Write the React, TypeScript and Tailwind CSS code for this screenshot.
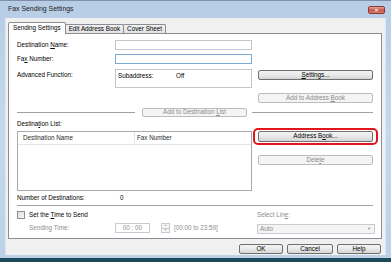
import React from "react";

const font = { fontFamily: '"Liberation Sans", Arial, sans-serif' };

function Btn({
  children,
  disabled,
  className = "",
}: {
  children: React.ReactNode;
  disabled?: boolean;
  className?: string;
}) {
  const look = disabled
    ? "border-[#b9bdc1] bg-[#f4f4f4] text-[#8a8a8a]"
    : "border-[#707070] bg-linear-to-b from-[#f3f3f3] via-[#e9e9e9] to-[#d5d5d5] text-black";
  return (
    <div className={`flex items-center justify-center rounded-[2px] border ${look} ${className}`}>
      {children}
    </div>
  );
}

function Etched({ className = "" }: { className?: string }) {
  return (
    <div className={`flex flex-col ${className}`}>
      <div className="h-px bg-[#a0a0a0]" />
      <div className="h-px bg-white" />
    </div>
  );
}

function Tab({ label, active }: { label: string; active?: boolean }) {
  return active ? (
    <div className="h-[12px] px-[4px] flex items-center border border-b-0 border-[#898c95] bg-white rounded-t-[2px] relative z-10 -mb-px">
      {label}
    </div>
  ) : (
    <div className="h-[9px] mt-[3px] px-[3px] flex items-center border border-b-0 border-[#898c95] bg-linear-to-b from-[#f2f2f2] to-[#e3e3e3] rounded-t-[2px] -ml-px">
      {label}
    </div>
  );
}

export default function App() {
  return (
    <div
      className="w-[391px] h-[262px] flex flex-col bg-linear-to-b from-[#b7cde6] via-[#c6d8ec] to-[#bcd1e8] border-t border-[#7d90a7] text-[6.3px] leading-none text-black overflow-hidden"
      style={font}
    >
      {/* title bar */}
      <div className="h-[17px] flex items-center justify-between pl-[8px] pr-[6px]">
        <span className="text-[6.9px] text-[#1b1b1b]">Fax Sending Settings</span>
        <div className="w-[17px] h-[8px] rounded-[2px] border border-[#8a3a35] bg-linear-to-b from-[#e5a49a] via-[#c9574a] to-[#d27a6c] flex items-center justify-center text-white text-[6px] font-bold">
          ×
        </div>
      </div>

      {/* client */}
      <div className="mx-[5px] h-[237px] bg-[#f0f0f0] border-l border-r border-[#dde7f3] flex flex-col">
        <div className="flex items-end pl-[2px] pt-[3px]">
          <Tab label="Sending Settings" active />
          <Tab label="Edit Address Book" />
          <Tab label="Cover Sheet" />
        </div>

        <div className="ml-[2px] w-[374px] h-[206px] border border-[#898c95] bg-white flex flex-col pl-[8px] pt-[6px]">
          {/* destination name */}
          <div className="flex h-[10px] items-center">
            <div className="w-[98px]">
              Destination <u>N</u>ame:
            </div>
            <div className="w-[137px] h-full border border-[#c3c6cc] bg-white" />
          </div>
          {/* fax number */}
          <div className="flex h-[10px] items-center mt-[4px]">
            <div className="w-[98px]">
              Fa<u>x</u> Number:
            </div>
            <div className="w-[137px] h-full border border-[#7aa9d4] bg-white" />
          </div>
          {/* advanced */}
          <div className="flex mt-[5px]">
            <div className="w-[98px] pt-[3px]">Advanced Function:</div>
            <div className="w-[137px] h-[19px] border border-[#c3c6cc] flex pt-[3px] pl-[2px]">
              <span className="w-[58px]">Subaddress:</span>
              <span>Off</span>
            </div>
            <div className="ml-[6px] w-[115px] pt-[1px]">
              <Btn className="h-[10px]">
                <span>
                  <u>S</u>ettings...
                </span>
              </Btn>
            </div>
          </div>
          {/* add to address book */}
          <div className="flex mt-[5px]">
            <div className="w-[241px]" />
            <Btn disabled className="w-[115px] h-[10px]">
              <span>
                Add to Address <u>B</u>ook
              </span>
            </Btn>
          </div>
          {/* separator row */}
          <div className="flex items-center mt-[5px] h-[9px]">
            <Etched className="w-[118px]" />
            <Btn disabled className="ml-[7px] w-[105px] h-[9px]">
              <span>
                Add to Destination <u>L</u>ist
              </span>
            </Btn>
            <Etched className="ml-[5px] w-[121px]" />
          </div>
          {/* destination list label */}
          <div className="h-[10px] mt-[2px] flex items-center">
            <span>
              Destina<u>t</u>ion List:
            </span>
          </div>
          {/* list + buttons */}
          <div className="flex mt-[2px]">
            <div className="w-[235px] h-[60px] border border-[#a5a9b0] flex flex-col">
              <div className="h-[13px] flex border-b border-[#e5e5e5]">
                <div className="w-[117px] pl-[5px] flex items-center border-r border-[#e5e5e5] text-[#2a2a2a]">
                  Destination Name
                </div>
                <div className="pl-[2px] flex items-center text-[#2a2a2a]">Fax Number</div>
              </div>
            </div>
            <div className="ml-[6px] w-[115px] flex flex-col">
              <div className="relative">
                <Btn className="h-[11px]">
                  <span>
                    Address B<u>o</u>ok...
                  </span>
                </Btn>
                <div className="absolute -left-[5px] -right-[5px] -top-[3px] -bottom-[3px] border-2 border-[#e0161c] rounded-[5px]" />
              </div>
              <Btn disabled className="h-[10px] mt-[13px]">
                <span>
                  Dele<u>t</u>e
                </span>
              </Btn>
            </div>
          </div>
          {/* number of destinations */}
          <div className="flex items-center h-[9px] mt-[3px]">
            <div className="w-[103px]">Number of Destinations:</div>
            <div>0</div>
          </div>
          <Etched className="w-[356px] mt-[2px]" />
          {/* time to send */}
          <div className="flex items-center h-[8px] mt-[4px]">
            <div className="w-[8px] h-[8px] border border-[#8f8f8f] bg-linear-to-br from-[#dcdcdc] to-[#f8f8f8]" />
            <div className="ml-[4px] w-[228px]">
              Set the <u>T</u>ime to Send
            </div>
            <div className="text-[#8d8d8d]">
              Select Lin<u>e</u>:
            </div>
          </div>
          <div className="flex items-center h-[10px] mt-[4px]">
            <div className="w-[98px] pl-[12px] text-[#8d8d8d]">Sending Time:</div>
            <div className="w-[35px] h-full border border-[#c8cbd0] bg-white flex items-center justify-center text-[#8d8d8d]">
              00 : 00
            </div>
            <div className="ml-[11px] w-[9px] h-full border border-[#c8cbd0] flex flex-col bg-[#f4f4f4]">
              <div className="flex-1 flex items-center justify-center border-b border-[#c8cbd0] text-[3px] text-[#a8a8a8]">▲</div>
              <div className="flex-1 flex items-center justify-center text-[3px] text-[#a8a8a8]">▼</div>
            </div>
            <div className="ml-[4px] w-[83px] text-[#8d8d8d]">[00:00 to 23:59]</div>
            <div className="w-[118px] h-full mt-[2px] border border-[#c8cbd0] bg-[#f4f4f4] flex items-center justify-between pl-[2px] pr-[3px] text-[#8d8d8d]">
              <span>Auto</span>
              <span className="text-[4px]">▼</span>
            </div>
          </div>
        </div>

        {/* dialog buttons */}
        <div className="flex justify-end gap-[4px] mt-[5px] pr-[4px]">
          <Btn className="w-[44px] h-[10px] border-[#3c7fb1]">OK</Btn>
          <Btn className="w-[46px] h-[10px]">Cancel</Btn>
          <Btn className="w-[44px] h-[10px]">Help</Btn>
        </div>
      </div>
      <div className="h-[3px]" />
      <div className="h-[4px] bg-[#1d4b5c]" />
    </div>
  );
}
